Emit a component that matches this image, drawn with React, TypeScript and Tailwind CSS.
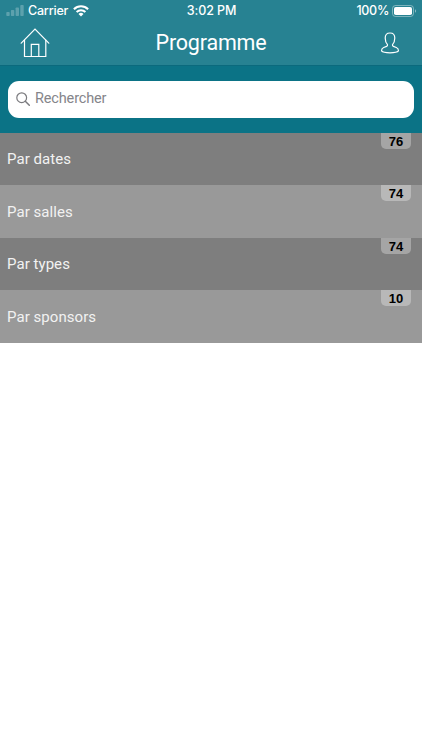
import React from 'react';

interface MenuItem {
  label: string;
  count: number;
}

const menuItems: MenuItem[] = [
  { label: 'Par dates', count: 76 },
  { label: 'Par salles', count: 74 },
  { label: 'Par types', count: 74 },
  { label: 'Par sponsors', count: 10 },
];

const StatusBar: React.FC = () => (
  <div className="grid h-5 grid-cols-3 items-center pl-1.5 pr-[5px] font-['Inter',sans-serif] text-[12.5px] font-medium leading-5">
    <div className="flex items-center">
      {/* Signal */}
      <svg width="18" height="11" viewBox="0 0 18 11" fill="white" fillOpacity="0.25">
        <rect x="0.3" y="7" width="3.4" height="4" rx="0.8" />
        <rect x="4.9" y="5" width="3.4" height="6" rx="0.8" />
        <rect x="9.6" y="2.5" width="3.4" height="8.5" rx="0.8" />
        <rect x="14.3" y="0" width="3.4" height="11" rx="0.8" />
      </svg>
      <span className="ml-1 w-[41px] whitespace-nowrap pt-px tracking-[-0.2px]">Carrier</span>
      <svg className="ml-1" width="16" height="12" viewBox="0 0 16 12" fill="none" stroke="white">
        <path d="M0.9 4.2a10.2 10.2 0 0 1 14.2 0" strokeWidth="2.1" />
        <path d="M3.6 7a6.3 6.3 0 0 1 8.8 0" strokeWidth="2" />
        <path d="M8 11.5L5.5 8.9a3.6 3.6 0 0 1 5 0z" fill="white" stroke="none" />
      </svg>
    </div>
    <span className="whitespace-nowrap pt-px text-center tracking-[-0.1px]">3:02 PM</span>
    <div className="flex items-center justify-end">
      <span className="pt-px tracking-[-0.3px]">100%</span>
      <svg className="ml-[3px]" width="25" height="12" viewBox="0 0 25 12">
        <rect x="0.5" y="0.5" width="21" height="11" rx="3" fill="none" stroke="white" strokeOpacity="0.4" />
        <rect x="2" y="2" width="18" height="8" rx="1.8" fill="white" />
        <path d="M23 4.2v3.6a2 2 0 0 0 0-3.6z" fill="white" fillOpacity="0.45" />
      </svg>
    </div>
  </div>
);

const Header: React.FC = () => (
  <header className="h-[65px] bg-[#278292] text-white">
    <StatusBar />
    <div className="grid h-[45px] grid-cols-[50px_1fr_50px] items-start">
      <svg className="ml-5 mt-[7px]" width="30" height="31" viewBox="0 0 30 31" fill="none" stroke="white" strokeWidth="1.2" strokeLinecap="round">
        <path d="M1.2 16.2L15 2l13.8 14.2" />
        <path d="M4.5 13v16.5h21.3V13" />
        <path d="M11.3 29.5V17.4h7.5v12.1" />
      </svg>
      <h1 className="pt-2 text-center text-[21.5px] font-normal leading-[30px] tracking-[-0.2px]">Programme</h1>
      <svg className="ml-[8px] mt-[11px]" width="20" height="23" viewBox="0 0 20 23" fill="none" stroke="white" strokeWidth="1.2" strokeLinejoin="round">
        <path d="M7.5 13.6C6 12 5.2 9.8 5.2 7 5.2 3.8 7 2 10 2s4.8 1.8 4.8 5c0 2.8-.8 5-2.3 6.6-.2.9.1 1.5.9 1.8l2.9 1.1c1.5.6 2.2 1.7 2.2 3.4-1.1 1.3-4.1 1.9-8.5 1.9s-7.4-.6-8.5-1.9c0-1.7.7-2.8 2.2-3.4l2.9-1.1c.8-.3 1.1-.9.9-1.8z" />
      </svg>
    </div>
  </header>
);

const SearchBar: React.FC = () => (
  <div className="h-[67.6px] border-t border-[#0b6a7d] bg-[#0b7386] px-2 pt-[15px]">
    <label className="flex h-[36.5px] items-center rounded-[11px] bg-white pl-2">
      <svg width="14" height="14" viewBox="0 0 14 14" fill="none" stroke="#7b7b7f" strokeWidth="1.2" strokeLinecap="round">
        <circle cx="5.7" cy="5.7" r="4.9" />
        <path d="M9.3 9.3l4 4" strokeWidth="1.5" />
      </svg>
      <input
        type="text"
        placeholder="Rechercher"
        className="ml-[5px] flex-1 bg-transparent text-[14.5px] tracking-[-0.15px] text-gray-700 outline-none placeholder:text-[#85858a]"
      />
    </label>
  </div>
);

const MenuRow: React.FC<{ item: MenuItem }> = ({ item }) => (
  <li className="group flex h-[52.6px] items-start justify-between bg-[#7e7e7e] pl-[7px] pr-[11px] even:bg-[#999999]">
    <span className="self-center pt-px text-[15px] tracking-[0.05px] text-[#f2f2f2]">{item.label}</span>
    {/* Compteur */}
    <span className="h-4 w-[30px] rounded-b-[5px] bg-[#a5a5a5] text-center font-['Liberation_Sans',sans-serif] text-[13px] font-bold leading-[17px] text-black group-even:bg-[#b8b8b8]">
      {item.count}
    </span>
  </li>
);

export default function App() {
  return (
    <div className="min-h-screen w-full overflow-hidden bg-white font-['Roboto',sans-serif]">
      <Header />
      <SearchBar />
      <ul>
        {menuItems.map((item) => (
          <MenuRow key={item.label} item={item} />
        ))}
      </ul>
    </div>
  );
}
